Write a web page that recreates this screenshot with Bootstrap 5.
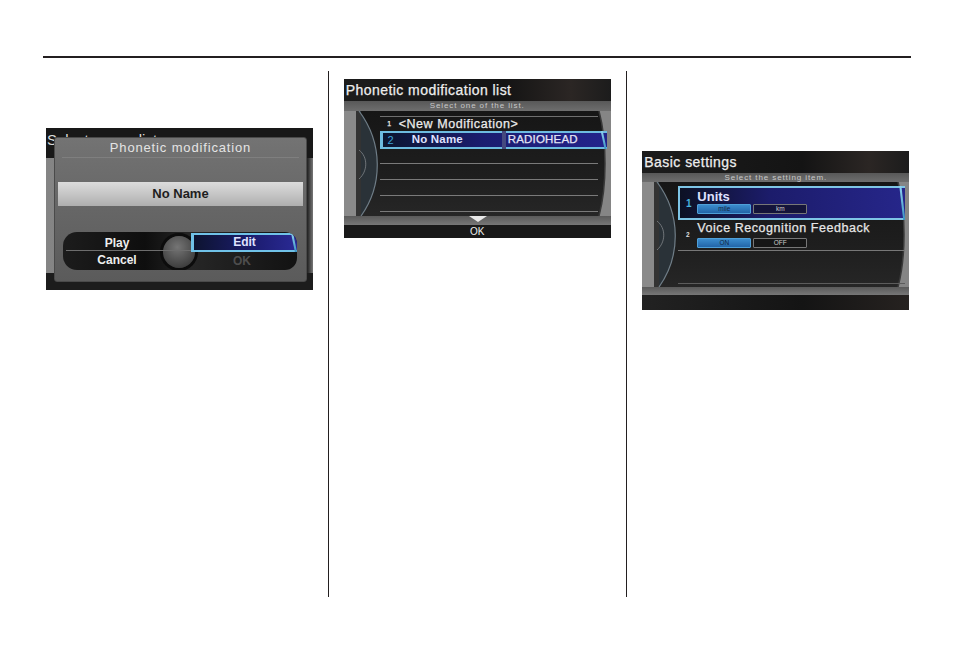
<!DOCTYPE html>
<html lang="en">
<head>
<meta charset="utf-8">
<title>Phonetic modification</title>
<link href="https://cdn.jsdelivr.net/npm/bootstrap@5.3.0/dist/css/bootstrap.min.css" rel="stylesheet">
<style>
html,body{margin:0;background:#fff;height:100%;overflow:hidden}
body{font-family:"Liberation Sans",Arial,sans-serif;color:#fff}
.sheet{width:954px;height:652px;padding:56px 43px 0}
.top-rule{height:2px;background:#231f20}
.pane-row{height:526px;margin-top:13px}
.pane{border-right:1px solid #231f20}
.pane-a{width:286px;padding:57px 0 0 3px}
.pane-b{width:299px;padding:8px 0 0 15px}
.pane-c{width:284px;padding:80px 0 0 15px}
.shot{width:267px;height:159px;position:relative;overflow:hidden;background:#1a1a1a}
.shot-a{height:162px}
.title-bar{height:22px;background:linear-gradient(90deg,#1c1c1c,#141414 60%,#2b2624 85%,#1c1c1c);font-size:14px;line-height:23px;letter-spacing:.45px;padding-left:2px;color:#eee;white-space:nowrap;-webkit-text-stroke:.25px #eee}
.hint-bar{height:10px;background:linear-gradient(#585858,#6e6e6e);font-size:8px;line-height:10px;text-align:center;color:#c8c8c8;letter-spacing:.9px}
.hint-thin{height:9px;line-height:9px;letter-spacing:.9px}
.body-wrap{height:105px;background:linear-gradient(#161616,#1e1e1e 60%,#262626);position:relative}
.deco{position:absolute;left:0;top:0}
.rows{position:absolute;left:36px;right:13px;top:5px}
.rows-c{right:4px;top:4px}
.list-line{height:16px;border-bottom:1px solid #7a7a7a;display:flex;align-items:center;font-size:12.5px;color:#ececec;white-space:nowrap;letter-spacing:.55px;-webkit-text-stroke:.25px #ececec}
.list-first{border-top:1px solid #6f6f6f;border-bottom:0;height:15px}
.list-gap{height:15px}
.row-num{width:19px;font-size:7px;text-align:center;flex:none;letter-spacing:0}
.hi-row{height:18px;background:linear-gradient(90deg,#0b1530,#1b1d70 45%,#23238c);border:2px solid #6dbbe0;border-left-width:3px;border-right:0;display:flex;align-items:center;font-size:11.5px;font-weight:700;letter-spacing:.2px;margin-right:-9px;position:relative;color:#dfe1ff}
.hi-row:after,.unit-row:after,.edit-btn:after{content:"";position:absolute;right:0;top:-2px;bottom:-2px;width:6px;background:linear-gradient(#8fd3ee,#3b93c4);clip-path:polygon(0 0,35% 0,100% 100%,65% 100%)}
.hi-row .row-num{font-size:11px;color:#3da4d8;width:16px;font-weight:400}
.hi-name{width:103px;padding-left:13px;flex:none}
.hi-val{border-left:4px solid #45497f;padding-left:2px;color:#e3e4f5;font-weight:400;-webkit-text-stroke:.25px #e3e4f5}
.foot-strip{background:linear-gradient(#5a5a5a,#777);position:relative}
.strip-b{height:9px}
.strip-c{height:8px}
.foot-bar{background:#191919;text-align:center;font-size:10px;color:#eee}
.foot-b{height:13px;line-height:13px}
.foot-c{height:15px;background:linear-gradient(90deg,#222,#141414 60%,#262220)}
.ok-tri{position:absolute;left:125px;top:0;width:0;height:0;border-left:9px solid transparent;border-right:9px solid transparent;border-top:6px solid #e8e8e8}
.unit-row{height:34px;background:linear-gradient(90deg,#0c1124,#1c1c6b 40%,#26268a);border:2px solid #7ec5e6;border-right:0;position:relative;display:flex;color:#dfe1ff}
.side-num{width:17px;align-self:center;text-align:center;font-size:10px;font-weight:700;color:#49b4df;flex:none}
.stack{padding-top:2px;font-size:13px;line-height:13px;font-weight:700;white-space:nowrap}
.toggles{display:flex;gap:2px;margin-top:1px}
.tog{width:54px;height:10px;line-height:8px;font-size:6.5px;text-align:center;border:1px solid #777;border-radius:1px;font-weight:400;color:#ccc;letter-spacing:0;background:#14143a;-webkit-text-stroke:0}
.tog-on{background:linear-gradient(#3b8ccc,#2265a8);border-color:#4fa0d8;color:#10253f}
.voice-row{height:31px;border-bottom:1px solid #777;display:flex;color:#e6e6e6}
.voice-row .side-num{color:#ddd;font-size:6.5px;width:19px;padding-top:0}
.voice-row .stack{font-weight:400;font-size:12.5px;letter-spacing:.55px;-webkit-text-stroke:.25px #e6e6e6}
.voice-row .toggles{margin-top:3px}
.tog-dark{background:#161616}
.blank-row{height:33px;border-bottom:1px solid #5c5c5c}
.scrim-bar{height:30px;background:#181818;font-size:15px;line-height:24px;padding-left:1px;color:#ddd}
.scrim-body{height:115px;background:linear-gradient(90deg,#858585,#757575 93%,#262626 98%,#777)}
.scrim-foot{height:17px;background:#1c1c1c}
.dialog{position:absolute;left:8px;top:9px;width:253px;height:145px;background:linear-gradient(#737373,#666 50%,#5b5b5b);border-radius:3px;border:1px solid #4a4a4a}
.dlg-title{margin:0 7px;height:20px;border-bottom:1px solid #7f7f7f;text-align:center;font-size:13px;line-height:20px;letter-spacing:.85px;color:#e4e4e4}
.dlg-name{margin:24px 3px 0 3px;height:24px;background:linear-gradient(#dcdcdc,#c6c6c6 50%,#aeaeae);color:#1e1e1e;text-align:center;font-size:13px;font-weight:700;line-height:24px}
.ctrl{position:absolute;left:8px;width:234px;top:94px;height:38px;background:linear-gradient(90deg,#1c1c1c,#0e0e0e 35%,#262626 55%,#121212);border-radius:14px 12px 12px 14px;overflow:hidden}
.ctrl-grid{display:grid;grid-template-columns:128px 1fr;height:100%;font-size:12px;font-weight:700;text-align:center;position:relative}
.ctrl-l{padding-right:20px;color:#eee}
.ctrl-l div{height:18px;line-height:18px}
.ctrl-l div:first-child{height:19px;line-height:22px;margin-left:3px;margin-right:-20px;border-bottom:1px solid #6d6d6d;padding-right:23px}
.ctrl-r{color:#4d4d4d}
.ctrl-r div:last-child{line-height:18px;padding-right:4px}
.edit-btn{height:19px;background:linear-gradient(90deg,#0d1430,#1d1d72 60%,#2a2a95);border:2px solid #70c2e8;border-left-width:3px;border-right:0;line-height:15px;color:#dfe2ff;margin-top:1px;position:relative;padding-right:2px}
.knob{position:absolute;left:100px;top:4px;width:32px;height:32px;border-radius:50%;background:radial-gradient(circle at 45% 35%,#757575,#424242 70%,#2a2a2a);box-shadow:0 0 0 3px #0c0c0c}
</style>
</head>
<body>
<div class="sheet">
  <div class="top-rule"></div>
  <div class="d-flex pane-row">
    <div class="pane pane-a">
      <div class="shot shot-a">
        <div class="scrim-bar">Select a user list</div>
        <div class="scrim-body"></div>
        <div class="scrim-foot"></div>
        <div class="dialog">
          <div class="dlg-title">Phonetic modification</div>
          <div class="dlg-name">No Name</div>
          <div class="ctrl">
            <div class="knob"></div>
            <div class="ctrl-grid">
              <div class="ctrl-l"><div>Play</div><div>Cancel</div></div>
              <div class="ctrl-r"><div class="edit-btn">Edit</div><div>OK</div></div>
            </div>
          </div>
        </div>
      </div>
    </div>
    <div class="pane pane-b">
      <div class="shot">
        <div class="title-bar">Phonetic modification list</div>
        <div class="hint-bar">Select one of the list.</div>
        <div class="body-wrap">
          <svg class="deco" width="267" height="105" viewBox="0 0 267 105" aria-hidden="true">
            <rect width="12" height="105" fill="#8a8a8a"/>
            <rect x="12" width="5" height="105" fill="#333"/>
            <path d="M15 0C39 32 39 74 17 105H17V0Z" fill="#2a3238"/>
            <path d="M15 0C39 32 39 74 17 105" fill="none" stroke="#6f7d87" stroke-width="1.2"/>
            <path d="M15 39C24 46 24 60 15 68" fill="none" stroke="#6f7478"/>
            <path d="M255 0C263 30 263 75 255 105H267V0Z" fill="#858585"/>
            <path d="M255 0C263 30 263 75 255 105" fill="none" stroke="#3a3a3a" stroke-width="1.5"/>
          </svg>
          <div class="rows">
            <div class="list-line list-first"><span class="row-num">1</span>&lt;New Modification&gt;</div>
            <div class="hi-row"><span class="row-num">2</span><span class="hi-name">No Name</span><span class="hi-val">RADIOHEAD</span></div>
            <div class="list-line list-gap"></div><div class="list-line"></div><div class="list-line"></div><div class="list-line"></div>
          </div>
        </div>
        <div class="foot-strip strip-b"><span class="ok-tri"></span></div>
        <div class="foot-bar foot-b">OK</div>
      </div>
    </div>
    <div class="pane-c">
      <div class="shot">
        <div class="title-bar">Basic settings</div>
        <div class="hint-bar hint-thin">Select the setting item.</div>
        <div class="body-wrap">
          <svg class="deco" width="267" height="105" viewBox="0 0 267 105" aria-hidden="true">
            <rect width="12" height="105" fill="#8a8a8a"/>
            <rect x="12" width="5" height="105" fill="#333"/>
            <path d="M15 0C39 32 39 74 17 105H17V0Z" fill="#2a3238"/>
            <path d="M15 0C39 32 39 74 17 105" fill="none" stroke="#6f7d87" stroke-width="1.2"/>
            <path d="M15 39C24 46 24 60 15 68" fill="none" stroke="#6f7478"/>
            <path d="M256 0C264 30 264 75 256 105H267V0Z" fill="#858585"/>
            <path d="M256 0C264 30 264 75 256 105" fill="none" stroke="#3a3a3a" stroke-width="1.5"/>
          </svg>
          <div class="rows rows-c">
            <div class="unit-row"><span class="side-num">1</span><div class="stack">Units<div class="toggles"><span class="tog tog-on">mile</span><span class="tog">km</span></div></div></div>
            <div class="voice-row"><span class="side-num">2</span><div class="stack">Voice Recognition Feedback<div class="toggles"><span class="tog tog-on">ON</span><span class="tog tog-dark">OFF</span></div></div></div>
            <div class="blank-row"></div>
          </div>
        </div>
        <div class="foot-strip strip-c"></div>
        <div class="foot-bar foot-c"></div>
      </div>
    </div>
  </div>
</div>
<script src="https://cdn.jsdelivr.net/npm/bootstrap@5.3.0/dist/js/bootstrap.bundle.min.js"></script>
</body>
</html>
